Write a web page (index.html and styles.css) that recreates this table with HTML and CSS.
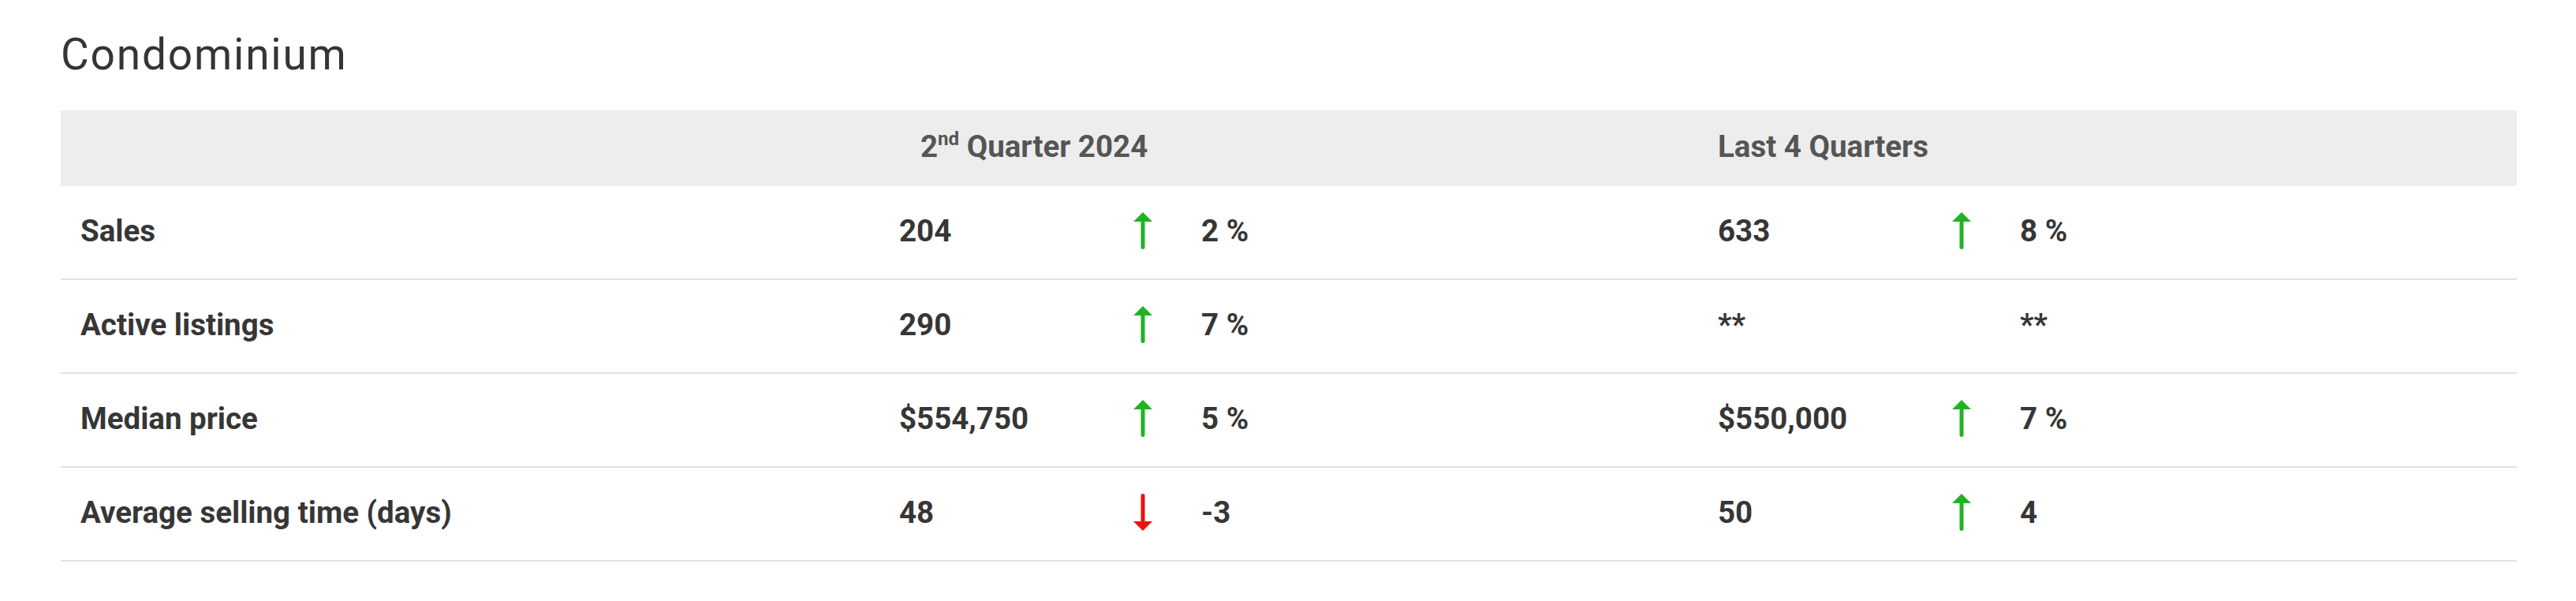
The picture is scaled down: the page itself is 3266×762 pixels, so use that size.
FILE: index.html
```html
<!DOCTYPE html>
<html lang="en">
<head>
<meta charset="utf-8">
<title>Condominium</title>
<link rel="stylesheet" href="styles.css">
</head>
<body>
<section class="panel">
  <h2 class="title">Condominium</h2>
  <div class="stats">
    <div class="row head">
      <div class="cell"></div>
      <div class="cell span3 first-head">2<sup>nd</sup> Quarter 2024</div>
      <div class="cell span3">Last 4 Quarters</div>
    </div>
    <div class="row">
      <div class="cell label">Sales</div>
      <div class="cell">204</div>
      <div class="cell arrow"><svg class="up" viewBox="0 0 24 47" width="24" height="47"><path d="M12 0 L24 12 L14.5 12 L14.5 45 Q14.5 47 12 47 Q9.5 47 9.5 45 L9.5 12 L0 12 Z"/></svg></div>
      <div class="cell">2 %</div>
      <div class="cell">633</div>
      <div class="cell arrow"><svg class="up" viewBox="0 0 24 47" width="24" height="47"><path d="M12 0 L24 12 L14.5 12 L14.5 45 Q14.5 47 12 47 Q9.5 47 9.5 45 L9.5 12 L0 12 Z"/></svg></div>
      <div class="cell">8 %</div>
    </div>
    <div class="row">
      <div class="cell label">Active listings</div>
      <div class="cell">290</div>
      <div class="cell arrow"><svg class="up" viewBox="0 0 24 47" width="24" height="47"><path d="M12 0 L24 12 L14.5 12 L14.5 45 Q14.5 47 12 47 Q9.5 47 9.5 45 L9.5 12 L0 12 Z"/></svg></div>
      <div class="cell">7 %</div>
      <div class="cell">**</div>
      <div class="cell arrow"></div>
      <div class="cell">**</div>
    </div>
    <div class="row">
      <div class="cell label">Median price</div>
      <div class="cell">$554,750</div>
      <div class="cell arrow"><svg class="up" viewBox="0 0 24 47" width="24" height="47"><path d="M12 0 L24 12 L14.5 12 L14.5 45 Q14.5 47 12 47 Q9.5 47 9.5 45 L9.5 12 L0 12 Z"/></svg></div>
      <div class="cell">5 %</div>
      <div class="cell">$550,000</div>
      <div class="cell arrow"><svg class="up" viewBox="0 0 24 47" width="24" height="47"><path d="M12 0 L24 12 L14.5 12 L14.5 45 Q14.5 47 12 47 Q9.5 47 9.5 45 L9.5 12 L0 12 Z"/></svg></div>
      <div class="cell">7 %</div>
    </div>
    <div class="row">
      <div class="cell label">Average selling time (days)</div>
      <div class="cell">48</div>
      <div class="cell arrow"><svg class="down" viewBox="0 0 24 47" width="24" height="47"><path d="M12 47 L24 35 L14.5 35 L14.5 2 Q14.5 0 12 0 Q9.5 0 9.5 2 L9.5 35 L0 35 Z"/></svg></div>
      <div class="cell">-3</div>
      <div class="cell">50</div>
      <div class="cell arrow"><svg class="up" viewBox="0 0 24 47" width="24" height="47"><path d="M12 0 L24 12 L14.5 12 L14.5 45 Q14.5 47 12 47 Q9.5 47 9.5 45 L9.5 12 L0 12 Z"/></svg></div>
      <div class="cell">4</div>
    </div>
  </div>
</section>
</body>
</html>
```

FILE: styles.css
```css
html, body {
  margin: 0;
  padding: 0;
  background: #ffffff;
}

body {
  font-family: Roboto, "Liberation Sans", Arial, sans-serif;
  color: #333333;
}

.panel {
  padding: 36px 0 0 77px;
}

.title {
  margin: 0 0 38px 0;
  font-size: 55px;
  line-height: 66px;
  font-weight: 400;
  letter-spacing: 1.8px;
  color: #353535;
}

.stats {
  width: 3114px;
}

.row {
  display: grid;
  grid-template-columns: 1038px 297px 86px 655px 297px 86px 655px;
  align-items: center;
  box-sizing: border-box;
  height: 119px;
  padding-bottom: 5px;
  border-bottom: 2px solid #e1e1e1;
  font-size: 38.5px;
  font-weight: 700;
  color: #363636;
}

.row.head {
  grid-template-columns: 1038px 1038px 1038px;
  height: 96px;
  padding-bottom: 5px;
  border-bottom: none;
  background: #ededed;
  color: #555555;
}

.cell {
  padding-left: 25px;
  white-space: nowrap;
}

.first-head {
  padding-left: 52px;
}

.first-head sup {
  font-size: 24px;
  line-height: 0;
  vertical-align: 15px;
}

.arrow {
  display: flex;
  align-items: center;
  height: 47px;
}

.arrow svg {
  display: block;
}

.up {
  fill: #1fb324;
}

.down {
  fill: #f01010;
}
```
